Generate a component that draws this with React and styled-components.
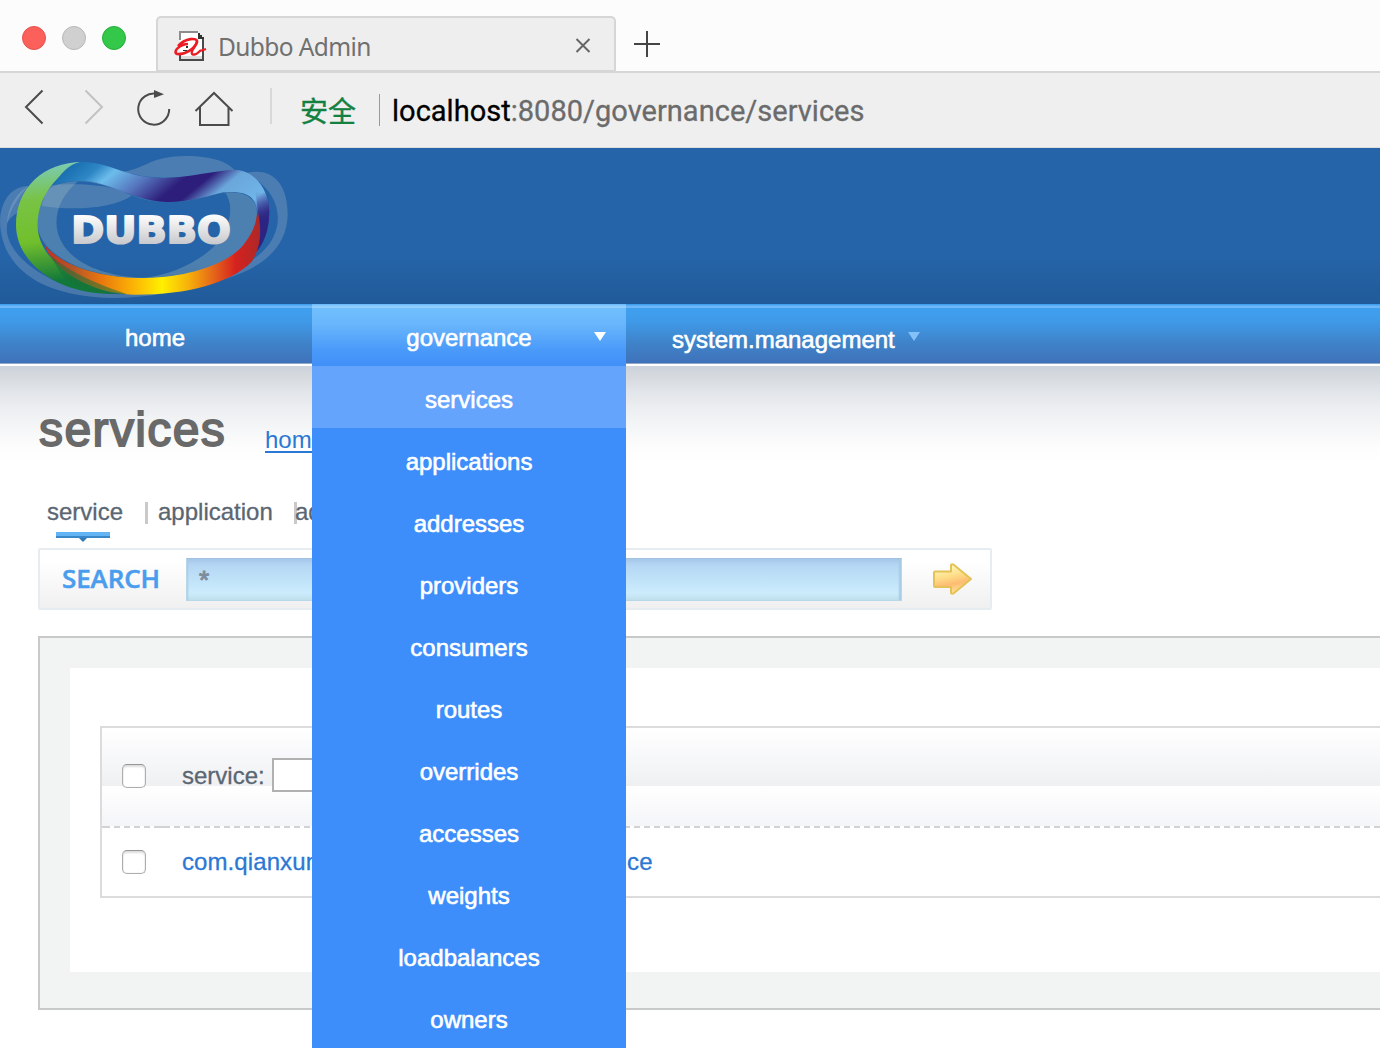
import React from 'react';
import styled, { createGlobalStyle } from 'styled-components';

const GlobalStyle = createGlobalStyle`
  * { box-sizing: border-box; }
  html, body { margin: 0; padding: 0; background: #fff; overflow: hidden; }
  body { font-family: "Liberation Sans", Arial, "Noto Sans CJK SC", sans-serif; font-size: 24px; }
`;

const Page = styled.div`
  width: 1380px;
  height: 1064px;
  overflow: hidden;
  background: #fff;
  display: flex;
  flex-direction: column;
`;

/* ---------- browser chrome ---------- */

const TabStrip = styled.div`
  height: 73px;
  flex: none;
  display: flex;
  align-items: flex-end;
  background: #fcfcfc;
  border-bottom: 2px solid #d6d6d6;
`;

const TrafficLights = styled.div`
  display: flex;
  gap: 16px;
  width: 156px;
  padding: 0 0 21px 22px;
`;

const Light = styled.span`
  width: 24px;
  height: 24px;
  border-radius: 50%;
  background: ${(p) => p.$fill};
  border: 1px solid ${(p) => p.$edge};
`;

const Tab = styled.div`
  width: 460px;
  height: 55px;
  display: flex;
  align-items: center;
  padding: 6px 23px 0 15px;
  background: #eee;
  border: 2px solid #d6d6d6;
  border-bottom-width: 1px;
  border-radius: 5px 5px 0 0;

  > svg:last-child { margin-top: -3px; }
`;

const TabTitle = styled.span`
  flex: 1;
  margin-left: 11px;
  font: 24.5px/30px "Noto Sans", sans-serif;
  color: #707070;
  letter-spacing: -0.6px;
`;

const NewTab = styled.div`
  padding: 0 0 13px 18px;
  line-height: 0;
`;

const Toolbar = styled.div`
  height: 75px;
  flex: none;
  display: flex;
  align-items: flex-start;
  background: #efefef;
  border-bottom: 1px solid #e0dcdc;
`;

const ToolIcons = styled.div`
  width: 270px;
  line-height: 0;
`;

const Divider = styled.span`
  width: ${(p) => p.$w}px;
  height: ${(p) => p.$h}px;
  margin-top: ${(p) => p.$top}px;
  background: ${(p) => p.$color};
`;

const Secure = styled.span`
  width: 107px;
  padding: 17px 0 0 28px;
  font: 28px/40px "Noto Sans CJK SC", sans-serif;
  color: #14803f;
  -webkit-text-stroke: 0.4px #14803f;
`;

const Url = styled.span`
  padding: 18px 0 0 12px;
  font: 29px/40px Roboto, sans-serif;
  letter-spacing: 0.02px;
  color: #6b6b6b;
  white-space: nowrap;
  -webkit-text-stroke: 0.3px currentColor;
  b { font-weight: 400; color: #000; }
`;

/* ---------- site header ---------- */

const Banner = styled.header`
  height: 156px;
  flex: none;
  background: linear-gradient(#2564a8 0%, #2564a8 70%, #205a99 100%);
  line-height: 0;
`;

const Nav = styled.nav`
  height: 62px;
  flex: none;
  display: flex;
  background: linear-gradient(#419ff0 0 1px, #58abf3 1px 2px, #6db7f6 2px 4px,
    #3fa0f0 4px, #3f9bea 16px, #3f82c8 40px, #3f72ba 59px, #8fa9c8 59px 60px, #fff 60px);
`;

const NavItem = styled.div`
  position: relative;
  width: ${(p) => p.$width}px;
  height: 62px;
  padding: ${(p) => p.$pad || '5px 2px 0 0'};
  display: flex;
  align-items: center;
  justify-content: ${(p) => (p.$start ? 'flex-start' : 'center')};
  color: #fff;
  -webkit-text-stroke: 0.6px #fff;
  background: ${(p) =>
    p.$open
      ? 'linear-gradient(#6dbdfb 0 1px, #80c5fc 1px 2px, #92cdfd 2px 4px, #70bffd 4px, #69b6fc 20px, #4a9afa 46px, #418ff8 62px)'
      : 'none'};
`;

const Caret = styled.i`
  position: absolute;
  top: 28px;
  left: ${(p) => p.$left}px;
  border: 6px solid transparent;
  border-top: 9px solid ${(p) => p.$color};
  border-bottom: 0;
`;

const Menu = styled.ul`
  position: absolute;
  top: 62px;
  left: 0;
  z-index: 2;
  width: 314px;
  margin: 0;
  padding: 0;
  list-style: none;
  background: #3d8efb;
`;

const MenuItem = styled.li`
  height: 62px;
  padding-top: 3px;
  line-height: 62px;
  text-align: center;
  background: ${(p) => (p.$active ? '#64a4fd' : 'transparent')};
`;

/* ---------- content ---------- */

const Content = styled.main`
  flex: 1;
  padding-left: 38px;
  background: linear-gradient(#ccd3dc 0, #d5d9de 10px, #e2e5e9 26px, #eceef1 42px, #f5f6f7 62px, #fdfdfd 82px, #fff 96px);
`;

const Heading = styled.div`
  display: flex;
  align-items: flex-start;
  height: 128px;
  padding-top: 36px;
`;

const Title = styled.h1`
  width: 227px;
  margin: 0;
  padding-left: 1px;
  font-size: 48px;
  line-height: 56px;
  font-weight: 400;
  letter-spacing: 1.4px;
  color: #696969;
  -webkit-text-stroke: 1.8px #696969;
`;

const Crumb = styled.a`
  padding-top: 24px;
  line-height: 28px;
  color: #2b78d4;
  text-decoration: underline;
  text-decoration-thickness: 2px;
  text-underline-offset: 3px;
`;

const Tabs = styled.div`
  height: 54px;
  display: flex;
  align-items: flex-start;
  padding: 4px 0 0 9px;
  color: #5a6672;
  line-height: 28px;
`;

const TabLink = styled.span`
  width: ${(p) => p.$width}px;
  display: flex;
  flex-direction: column;
  -webkit-text-stroke: 0.3px #5a6672;
  svg { margin: 6px 0 0 9px; }
`;

const TabRule = styled.span`
  width: 3px;
  height: 22px;
  margin: 4px ${(p) => p.$gap}px 0 0;
  background: #cbc9c8;
`;

const SearchBar = styled.div`
  width: 954px;
  height: 62px;
  display: flex;
  align-items: center;
  border: 2px solid #e7ecf0;
  border-radius: 2px;
  background: linear-gradient(#fff 20%, #f0f0f0);
`;

const SearchLabel = styled.span`
  width: 146px;
  padding: 0 0 2px 22px;
  font: 600 26px/36px "Open Sans", sans-serif;
  color: #4a9ded;
  letter-spacing: -0.1px;
  -webkit-text-stroke: 0.5px #4a9ded;
`;

const SearchField = styled.div`
  width: 716px;
  height: 43px;
  padding: 0 12px;
  font: 26px/43px "Liberation Sans", sans-serif;
  color: #7d8b9c;
  -webkit-text-stroke: 1px #7d8b9c;
  border: 1px solid #b8d8ea;
  border-top-color: #a3c2df;
  background: linear-gradient(#a5c7e8 0, #b5d6f3 6px, #bcdff7 16px, #ccecfd 34px, #bfe0ea 41px);
  box-shadow: inset 2px 0 2px -1px #a6cbe2, inset -3px 0 2px -1px #a6cbe2;
`;

const GoButton = styled.span`
  margin-left: 30px;
  line-height: 0;
`;

const Panel = styled.section`
  width: 1500px;
  height: 374px;
  margin-top: 26px;
  padding: 30px;
  border: 2px solid #c8c9c9;
  background: #f2f4f3;
`;

const PanelBody = styled.div`
  height: 304px;
  padding: 58px 30px 0;
  background: #fff;
`;

const Table = styled.div`
  height: 172px;
  border: 2px solid #dcdcdc;
`;

const HeadRow = styled.div`
  height: 98px;
  padding: 0 0 2px 20px;
  display: flex;
  align-items: center;
  color: #5a6672;
  -webkit-text-stroke: 0.3px #5a6672;
  background: linear-gradient(#fff 0, #f6f7f9 32px, #eff0f2 58px, #fff 58px, #f4f5f8 98px);
`;

const DashLine = styled.div`
  height: 2px;
  background: linear-gradient(#d2d2d4, #d2d2d4) 52px 0 / 16px 2px no-repeat,
    linear-gradient(#d2d2d4, #d2d2d4) 0 0 / 8px 2px no-repeat,
    repeating-linear-gradient(90deg, #d2d2d4 0 6px, #fff 6px 10px) 2px 0;
`;

const BodyRow = styled.div`
  height: 68px;
  padding-left: 20px;
  display: flex;
  align-items: center;
`;

const Check = styled.span`
  width: 24px;
  height: 24px;
  margin-right: 36px;
  border: 1px solid #adadad;
  border-top-color: #969696;
  border-radius: 5px;
  background: #fff;
  box-shadow: inset 0 2px 2px #ddd, inset 0 0 1px #bbb;
`;

const FilterInput = styled.span`
  width: 300px;
  height: 34px;
  margin: -2px 0 0 7px;
  border: 2px solid #b1b1b1;
  background: #fff;
`;

const ServiceLink = styled.a`
  color: #2b78d4;
  white-space: nowrap;
  letter-spacing: 0.09px;
  -webkit-text-stroke: 0.3px #2b78d4;
`;

/* ---------- drawings ---------- */

const Favicon = () => (
  <svg width="34" height="32" viewBox="0 0 34 32" shapeRendering="crispEdges">
    <path d="M7 1h18l5 6v22H7z" fill="#fff" />
    <path d="M7 9V1h18" fill="none" stroke="#8d8d8d" strokeWidth="2" />
    <path d="M25 2h2v2h2v2h2v2h-6z" fill="#333" />
    <path d="M30 8v21H7v-5" fill="none" stroke="#4a4a4a" strokeWidth="2" />
    <path d="M8 25h21v3H8z" fill="#ddd" />
    <g shapeRendering="auto" fill="none" stroke="#ec1c24">
      <path d="M5 15C12 7 25 6 24 11C22 17 13 24 4 23C-1 20 8 13 15 13" strokeWidth="2.6" />
      <path d="M24 10C24 15 17 20 19 23C22 25 25 22 28 19M27 20l6-2" strokeWidth="2.3" />
    </g>
    <path d="M13 15h2v2h-2zM10 19h4v1h-4z" fill="#333" />
  </svg>
);

const ToolbarGlyphs = () => (
  <svg width="270" height="74" viewBox="0 73 270 74" fill="none" stroke="#4b4b4b" strokeWidth="2">
    <path d="M42.500 90.500L26 107L42.500 123.500" />
    <path d="M85.500 90.500L102 107L85.500 123.500" stroke="#c2c2c2" />
    <path d="M157 94A15.500 15.500 0 1 0 169.200 109" />
    <path d="M154 90l10 4.200l-10 3.800z" fill="#4b4b4b" stroke="none" />
    <path d="M195.500 111L214 93L232.500 111M200 107v18h28.500v-18" />
  </svg>
);

const Logo = () => (
  <svg width="310" height="156" viewBox="0 9 930 468">
    <defs>
      <linearGradient id="green" gradientUnits="userSpaceOnUse" x1="120" y1="52" x2="170" y2="440">
        <stop offset="0" stopColor="#7cccc0" />
        <stop offset=".28" stopColor="#78c344" />
        <stop offset=".6" stopColor="#72bf2c" />
        <stop offset=".92" stopColor="#12783a" />
      </linearGradient>
      <linearGradient id="blue" gradientUnits="userSpaceOnUse" x1="180" y1="100" x2="487" y2="468">
        <stop offset="0" stopColor="#1c72b2" />
        <stop offset=".1" stopColor="#2e86c5" />
        <stop offset=".185" stopColor="#6cbdec" />
        <stop offset=".34" stopColor="#5575bd" />
        <stop offset=".5" stopColor="#2e1e7b" />
        <stop offset=".59" stopColor="#2e1e7b" />
        <stop offset=".7" stopColor="#6aa6da" />
        <stop offset=".88" stopColor="#70b5e8" />
        <stop offset="1" stopColor="#31308c" />
      </linearGradient>
      <linearGradient id="fire" gradientUnits="userSpaceOnUse" x1="135" y1="0" x2="785" y2="0">
        <stop offset="0" stopColor="#c62f20" />
        <stop offset=".13" stopColor="#b1562a" />
        <stop offset=".25" stopColor="#e8730f" />
        <stop offset=".4" stopColor="#fbb005" />
        <stop offset=".54" stopColor="#fff000" />
        <stop offset=".66" stopColor="#f7b20a" />
        <stop offset=".78" stopColor="#e4641a" />
        <stop offset=".88" stopColor="#d6221e" />
        <stop offset="1" stopColor="#a92928" />
      </linearGradient>
      <linearGradient id="tail" gradientUnits="userSpaceOnUse" x1="0" y1="140" x2="0" y2="230">
        <stop offset="0" stopColor="#33308c" stopOpacity="0" />
        <stop offset="1" stopColor="#2c2382" />
      </linearGradient>
      <linearGradient id="silver" x1="0" y1="0" x2="0" y2="1">
        <stop offset=".2" stopColor="#fafafa" />
        <stop offset=".85" stopColor="#c5c6ca" />
      </linearGradient>
    </defs>
    <g fill="#b9c6d6" fillOpacity=".26">
      <path d="M85 123C20 125-4 190 1 245C10 350 95 452 330 459C440 460 540 440 610 418L600 405C500 450 300 470 170 410C60 360 10 290 22 235C28 200 50 160 85 123Z" />
      <path d="M85 123C40 150 22 200 22 235C26 225 34 215 50 205Z" />
      <path d="M145 120C230 115 330 115 395 152C340 190 220 198 125 182Z" />
      <path d="M370 80C440 70 450 33 560 33C640 34 680 50 705 76C620 82 540 108 430 94Z" />
      <path d="M740 84C820 65 864 120 863 210C860 330 750 400 560 425C720 380 815 330 832 240C840 180 815 130 740 84Z" />
    </g>
    <path fill="#a9c3c5" fillOpacity=".3" fillRule="evenodd" d="M112 230C112 140 150 108 250 108C350 110 380 170 500 171C590 172 640 142 690 142C760 142 775 180 770 220C765 330 650 398 440 400C280 402 112 340 112 230ZM235 108C170 160 150 240 190 300C230 360 320 395 430 398C530 390 640 330 675 260C697 210 695 170 675 142C620 150 570 172 500 171C400 170 330 110 235 108Z" />
    <path fill="url(#green)" d="M250 51C130 50 48 130 48 240C48 350 170 450 340 446C200 400 113 330 113 240C113 150 175 80 250 51Z" />
    <path fill="url(#blue)" d="M240 51C330 48 370 98 490 99C580 98 640 75 710 75C775 80 810 150 808 205C808 255 790 300 768 322C777 270 778 190 760 165C745 142 710 138 670 142C620 155 560 172 500 171C400 168 330 108 245 108C210 108 180 112 160 122C180 88 205 58 240 51Z" />
    <path fill="url(#tail)" d="M765 140L802 145C815 210 805 280 768 322C777 270 778 190 765 140Z" />
    <path fill="url(#fire)" d="M133 298C190 372 330 402 440 399C560 396 680 360 730 300C762 260 770 230 772 195C787 250 783 310 755 350C690 415 560 450 400 449C280 446 160 380 133 298Z" />
    <path fill="#157338" fillOpacity=".55" d="M150 330C210 385 300 420 380 447C290 450 220 425 185 390Z" />
    <text x="214" y="295" textLength="478" lengthAdjust="spacingAndGlyphs" fontFamily="DejaVu Sans" fontWeight="700" fontSize="114" fill="url(#silver)" stroke="url(#silver)" strokeWidth="6" strokeLinejoin="round">DUBBO</text>
  </svg>
);

const menu = ['services', 'applications', 'addresses', 'providers', 'consumers', 'routes',
  'overrides', 'accesses', 'weights', 'loadbalances', 'owners'];

export default function App() {
  return (
    <Page>
      <GlobalStyle />
      <TabStrip>
        <TrafficLights>
          <Light $fill="#fc605b" $edge="#e5514d" />
          <Light $fill="#d0d0d0" $edge="#b8b8b8" />
          <Light $fill="#34c84a" $edge="#24ae38" />
        </TrafficLights>
        <Tab>
          <Favicon />
          <TabTitle>Dubbo Admin</TabTitle>
          <svg width="16" height="16" viewBox="0 0 16 16" stroke="#666" strokeWidth="2">
            <path d="M1.500 1L14.500 14M14.500 1L1.500 14" />
          </svg>
        </Tab>
        <NewTab>
          <svg width="26" height="27" viewBox="0 0 26 27" stroke="#444" strokeWidth="2">
            <path d="M0 13h26M13 0v26" />
          </svg>
        </NewTab>
      </TabStrip>
      <Toolbar>
        <ToolIcons><ToolbarGlyphs /></ToolIcons>
        <Divider $w={2} $h={36} $top={15} $color="#d8d8d8" />
        <Secure>安全</Secure>
        <Divider $w={1} $h={32} $top={21} $color="#999" />
        <Url><b>localhost</b>:8080/governance/services</Url>
      </Toolbar>
      <Banner><Logo /></Banner>
      <Nav>
        <NavItem $width={312}>home</NavItem>
        <NavItem $width={314} $open $pad="5px 0 0 0">
          governance
          <Caret $left={282} $color="#fff" />
          <Menu>
            {menu.map((label, i) => <MenuItem key={label} $active={i === 0}>{label}</MenuItem>)}
          </Menu>
        </NavItem>
        <NavItem $width={314} $start $pad="9px 0 0 46px">
          system.management
          <Caret $left={282} $color="#83c1f8" />
        </NavItem>
      </Nav>
      <Content>
        <Heading>
          <Title>services</Title>
          <Crumb>home</Crumb>
        </Heading>
        <Tabs>
          <TabLink $width={98}>
            service
            <svg width="54" height="11" viewBox="0 0 54 11">
              <path d="M0 0h54v4H0z" fill="#62b4f5" />
              <path d="M0 4h54v2H0z" fill="#3b88c8" />
              <path d="M23 6h8l-4 4z" fill="#3279b4" />
            </svg>
          </TabLink>
          <TabRule $gap={10} />
          <TabLink $width={136}>application</TabLink>
          <TabRule $gap={-2} />
          <TabLink $width={90}>address</TabLink>
        </Tabs>
        <SearchBar>
          <SearchLabel>SEARCH</SearchLabel>
          <SearchField>*</SearchField>
          <GoButton>
            <svg width="42" height="34" viewBox="0 0 42 34">
              <defs>
                <linearGradient id="gold" x1="0" y1="0" x2=".25" y2="1">
                  <stop offset=".1" stopColor="#fffbc0" />
                  <stop offset=".5" stopColor="#fedc86" />
                  <stop offset=".75" stopColor="#fdbb72" />
                  <stop offset="1" stopColor="#fedf90" />
                </linearGradient>
              </defs>
              <path d="M3 9.500H19V3Q20 1.500 22 3L39 17L22 31Q20 32.500 19 31V25H3Q2 25 2 24V10.500Q2 9.500 3 9.500Z" fill="url(#gold)" stroke="#e4c257" strokeWidth="2" strokeLinejoin="round" />
            </svg>
          </GoButton>
        </SearchBar>
        <Panel>
          <PanelBody>
            <Table>
              <HeadRow>
                <Check />service:<FilterInput />
              </HeadRow>
              <DashLine />
              <BodyRow>
                <Check /><ServiceLink>com.qianxunclub.dubbo.service.TestService</ServiceLink>
              </BodyRow>
            </Table>
          </PanelBody>
        </Panel>
      </Content>
    </Page>
  );
}
